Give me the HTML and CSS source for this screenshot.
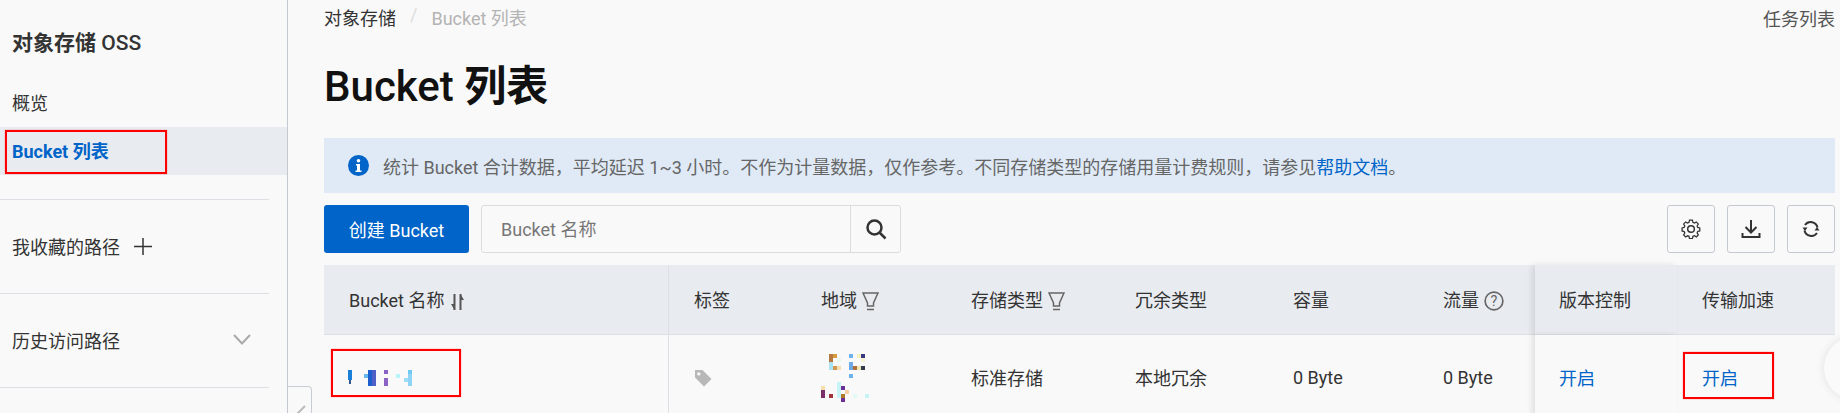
FILE: index.html
```html
<!DOCTYPE html>
<html lang="zh-CN">
<head>
  <meta charset="UTF-8" />
  <title>Bucket 列表 - 对象存储 OSS</title>
  <link rel="stylesheet" href="styles.css">
</head>
<body>

  <aside class="sidebar">
    <div class="side-title"><span class="cjk-bold">对象存储</span> OSS</div>
    <nav class="side-nav">
      <a class="side-item">概览</a>
      <a class="side-item active">Bucket 列表<span class="mark mark-nav"></span></a>
    </nav>
    <div class="side-section">
      <span>我收藏的路径</span>
      <svg class="side-plus" width="18" height="18" viewBox="0 0 18 18"><path d="M0 9.5h18M9 1v17" /></svg>
    </div>
    <div class="side-section">
      <span>历史访问路径</span>
      <svg class="side-chevron" width="18" height="11" viewBox="0 0 18 11"><path d="M1 1l8 8.500 8-8.500" /></svg>
    </div>
    <div class="side-section"></div>
  </aside>
  <div class="collapse-handle">
    <svg width="12" height="12" viewBox="0 0 12 12"><path d="M1 11L10 2" /></svg>
  </div>

  <main class="content">
    <div class="topbar">
      <div class="crumbs">
        <span>对象存储</span>
        <span class="crumb-sep">/</span>
        <span class="crumb-current">Bucket 列表</span>
      </div>
      <a class="task-link">任务列表</a>
    </div>

    <h1>Bucket <span class="cjk-bold">列表</span></h1>

    <div class="notice">
      <svg class="notice-icon" width="21" height="21" viewBox="0 0 21 21">
        <circle cx="10.500" cy="10.500" r="10.500" fill="#0064c8" />
        <circle cx="10.500" cy="5.800" r="1.800" fill="#fff" />
        <path d="M8 9h4v6.500h1.500V17h-6v-1.500H9v-5H8z" fill="#fff" />
      </svg>
      <span>统计 Bucket 合计数据，平均延迟 1~3 小时。不作为计量数据，仅作参考。不同存储类型的存储用量计费规则，请参见<a class="link">帮助文档</a>。</span>
    </div>

    <div class="toolbar">
      <button class="btn-primary">创建 Bucket</button>
      <div class="search">
        <input type="text" placeholder="Bucket 名称" />
        <button class="search-btn">
          <svg width="22" height="22" viewBox="0 0 22 22"><circle cx="9.500" cy="9.500" r="7" /><path d="M14.500 14.500L20.500 20.500" /></svg>
        </button>
      </div>
      <div class="tool-group">
        <button class="tool-btn">
          <svg width="20" height="20" viewBox="0 0 18 18"><path d="M7.500 1h3l.5 2.300 1.500.7 2-1.200 2 2.100-1.200 2 .6 1.500 2.100.6v3l-2.100.5-.6 1.500 1.200 2-2 2.100-2-1.200-1.500.6-.5 2.300h-3L7 17.500 5.500 17l-2 1.200-2-2.100 1.200-2L2 12.600-.1 12V9l2.100-.6.700-1.500-1.200-2 2-2.100 2 1.200L7 3.300z" transform="scale(.88) translate(1.200 .2)" /><circle cx="9" cy="9" r="3" /></svg>
        </button>
        <button class="tool-btn">
          <svg width="20" height="20" viewBox="0 0 20 20"><path class="thick" d="M10 1v12M4.500 8l5.500 5.500L15.500 8M1.500 14v4h17v-4" /></svg>
        </button>
        <button class="tool-btn">
          <svg width="18" height="18" viewBox="0 0 18 18"><path class="thick" d="M15.500 7.500A7 7 0 0 0 3 5M2.500 10.500A7 7 0 0 0 15 13" /><path class="solid" d="M.5 7.500h5L3 11zM12.500 10.500h5L15 7z" /></svg>
        </button>
      </div>
    </div>

    <table class="bucket-table">
      <colgroup>
        <col class="col-name"><col class="col-tag"><col class="col-region"><col class="col-type"><col class="col-redundancy"><col class="col-size"><col class="col-flow"><col class="col-version"><col class="col-accel">
      </colgroup>
      <thead>
        <tr>
          <th class="split">Bucket 名称
            <svg class="th-icon" width="15" height="18" viewBox="0 0 15 18"><path class="sort" d="M4.500 1v16M10.500 1v16" /><path class="solid" d="M4.500 17L1 11h3.500zM10.500 1L14 7h-3.500z" /></svg>
          </th>
          <th>标签</th>
          <th>地域
            <svg class="th-icon" width="17" height="19" viewBox="0 0 17 19"><path d="M1 1h15l-4.500 10v3h-6v-3zM5 17.500h7" /></svg>
          </th>
          <th>存储类型
            <svg class="th-icon" width="17" height="19" viewBox="0 0 17 19"><path d="M1 1h15l-4.500 10v3h-6v-3zM5 17.500h7" /></svg>
          </th>
          <th>冗余类型</th>
          <th>容量</th>
          <th>流量
            <svg class="th-icon" width="20" height="20" viewBox="0 0 18 18"><circle cx="9" cy="9" r="8" /><text x="9" y="13.500" text-anchor="middle" class="help-mark">?</text></svg>
          </th>
          <th class="pinned">版本控制</th>
          <th>传输加速</th>
        </tr>
      </thead>
      <tbody>
        <tr>
          <td class="split media">
            <div class="cell-mark">
              <svg class="mosaic mosaic-name" width="70" height="28" viewBox="0 0 70 28">
                <rect x="0" y="6" width="4" height="10" fill="#1a7fd8" /><rect x="1" y="16" width="2" height="4" fill="#35558f" />
                <rect x="16" y="10" width="4" height="4" fill="#6ab8f0" /><rect x="20" y="6" width="4" height="16" fill="#1e5fd0" /><rect x="24" y="6" width="4" height="16" fill="#4f5fc8" />
                <rect x="36" y="6" width="4" height="4" fill="#8a63c4" /><rect x="36" y="14" width="4" height="8" fill="#8a63c4" />
                <rect x="48" y="10" width="4" height="4" fill="#b8f3f8" /><rect x="60" y="6" width="4" height="4" fill="#6fc8f5" /><rect x="56" y="14" width="4" height="4" fill="#9fdcf5" /><rect x="60" y="10" width="4" height="12" fill="#8fd3f5" />
              </svg>
              <span class="mark mark-name"></span>
            </div>
          </td>
          <td class="media">
            <svg class="tag-icon" width="18" height="18" viewBox="0 0 18 18"><path fill-rule="evenodd" d="M1 1h7.500L17.500 10 10 17.500 1 8.500zM4.800 3.200a1.700 1.700 0 1 0 0 3.400 1.700 1.700 0 0 0 0-3.400z" /></svg>
          </td>
          <td class="media">
            <svg class="mosaic" width="50" height="56" viewBox="0 0 50 56">
              <rect x="8" y="4" width="4" height="8" fill="#b5793f" /><rect x="12" y="4" width="4" height="4" fill="#d69a3f" /><rect x="8" y="12" width="4" height="8" fill="#a9e3f5" /><rect x="12" y="16" width="4" height="4" fill="#cf9a50" /><rect x="16" y="16" width="4" height="4" fill="#f3dfb0" /><rect x="16" y="8" width="4" height="4" fill="#e9f8ec" />
              <rect x="28" y="4" width="4" height="4" fill="#6fb3ee" /><rect x="28" y="12" width="4" height="8" fill="#6fa9e4" /><rect x="32" y="16" width="4" height="4" fill="#b06f3a" /><rect x="28" y="24" width="4" height="4" fill="#6fb3ee" /><rect x="36" y="4" width="4" height="4" fill="#f7f0c0" /><rect x="40" y="4" width="4" height="4" fill="#3a3a80" /><rect x="40" y="8" width="4" height="4" fill="#f6f3d0" /><rect x="36" y="16" width="4" height="4" fill="#efe6b5" /><rect x="40" y="16" width="4" height="4" fill="#333a4a" />
              <rect x="0" y="36" width="4" height="4" fill="#f4deaa" /><rect x="0" y="40" width="4" height="8" fill="#7a2f6b" /><rect x="8" y="44" width="4" height="4" fill="#a3333f" /><rect x="16" y="32" width="4" height="16" fill="#c9f4f7" /><rect x="20" y="36" width="4" height="4" fill="#6a3094" /><rect x="24" y="40" width="4" height="4" fill="#f7cfa0" /><rect x="20" y="44" width="4" height="4" fill="#b07a2a" /><rect x="20" y="48" width="4" height="4" fill="#6a3094" /><rect x="32" y="44" width="4" height="4" fill="#e5f8f8" /><rect x="44" y="44" width="4" height="4" fill="#c5f5f5" />
            </svg>
          </td>
          <td>标准存储</td>
          <td>本地冗余</td>
          <td>0 Byte</td>
          <td>0 Byte</td>
          <td class="pinned"><a class="link">开启</a></td>
          <td><div class="cell-mark"><a class="link">开启</a><span class="mark mark-accel"></span></div></td>
        </tr>
      </tbody>
    </table>
  </main>

  <div class="float-ball"></div>

</body>
</html>
```

FILE: styles.css
```css
* {
  box-sizing: border-box;
}

body {
  margin: 0;
  height: 413px;
  overflow: hidden;
  display: flex;
  position: relative;
  background: #f9f9f9;
  color: #333;
  font-family: Roboto, 'Noto Sans CJK SC', sans-serif;
  font-size: 18px;
}

a {
  cursor: pointer;
}

.link {
  color: #0064c8;
}

.cjk-bold {
  font-weight: 700;
}

/* Red annotation boxes drawn over the screenshot */
.mark {
  position: absolute;
  border: 2px solid #f00;
  box-shadow: 0 0 1px rgba(255, 0, 0, 0.6);
  pointer-events: none;
}

.mark-nav {
  left: 5px;
  top: 3px;
  width: 162px;
  height: 44px;
}

.mark-name {
  left: -18px;
  top: -15px;
  width: 130px;
  height: 48px;
}

.mark-accel {
  left: -19px;
  top: -12px;
  width: 91px;
  height: 47px;
}

.cell-mark {
  position: relative;
}

/* Sidebar */
.sidebar {
  flex: 0 0 288px;
  border-right: 1px solid #c4c8d0;
}

.side-title {
  padding: 28px 0 0 12px;
  line-height: 30px;
  font-size: 21px;
  font-weight: 500;
}

.side-nav {
  margin: 21px 0 24px;
}

.side-item {
  display: block;
  position: relative;
  height: 48px;
  line-height: 49px;
  padding-left: 12px;
}

.side-item.active {
  background: #e8ebf0;
  color: #0064c8;
  font-weight: 700;
}

.side-section {
  height: 94px;
  margin-right: 18px;
  padding: 0 18px 2px 12px;
  border-top: 1px solid #dcdfe4;
  display: flex;
  align-items: center;
}

.side-plus {
  margin-left: 14px;
}

.side-plus path {
  fill: none;
  stroke: #333;
  stroke-width: 1.500;
}

.side-chevron {
  margin-left: auto;
}

.side-chevron path {
  fill: none;
  stroke: #aaa;
  stroke-width: 2;
}

.collapse-handle {
  position: absolute;
  left: 288px;
  top: 386px;
  width: 24px;
  height: 40px;
  border: 1px solid #c8ccd4;
  border-left: none;
  border-radius: 0 4px 4px 0;
  padding: 17px 0 0 7px;
}

.collapse-handle svg {
  display: block;
}

.collapse-handle path {
  stroke: #bbb;
  stroke-width: 2;
}

/* Main area */
.content {
  flex: 1;
  min-width: 0;
  padding: 0 5px 0 36px;
}

.topbar {
  height: 36px;
  display: flex;
  justify-content: space-between;
  align-items: center;
}

.crumbs {
  display: flex;
  gap: 14px;
  padding-bottom: 2px;
}

.crumb-sep {
  color: #ddd;
}

.crumb-current {
  color: #b3b3b3;
}

.task-link {
  color: #555;
}

h1 {
  margin: 0;
  height: 102px;
  line-height: 102px;
  font-size: 42px;
  font-weight: 500;
  color: #111;
}

.notice {
  height: 55px;
  padding-left: 24px;
  display: flex;
  align-items: center;
  gap: 14px;
  background: #dfeaf6;
  color: #666;
}

.notice-icon {
  flex: none;
}

.toolbar {
  margin-top: 12px;
  height: 48px;
  display: flex;
  gap: 12px;
}

button {
  font: inherit;
  cursor: pointer;
  padding: 0;
}

.btn-primary {
  width: 145px;
  border: none;
  border-radius: 3px;
  background: #0064c8;
  color: #fff;
}

.search {
  width: 420px;
  display: flex;
  border: 1px solid #dcdcdc;
  border-radius: 3px;
}

.search input {
  flex: 1;
  min-width: 0;
  padding: 0 0 0 19px;
  border: none;
  background: transparent;
  font: inherit;
  outline: none;
}

.search input::placeholder {
  color: #777;
  opacity: 1;
}

.search-btn {
  width: 50px;
  border: none;
  border-left: 1px solid #dcdcdc;
  background: transparent;
  display: flex;
  align-items: center;
  justify-content: center;
}

.search-btn svg {
  fill: none;
  stroke: #333;
  stroke-width: 2.500;
}

.tool-group {
  margin-left: auto;
  display: flex;
  gap: 12px;
}

.tool-btn {
  width: 48px;
  border: 1px solid #c4c8d0;
  border-radius: 3px;
  background: transparent;
  display: flex;
  align-items: center;
  justify-content: center;
}

.tool-btn svg {
  fill: none;
  stroke: #333;
  stroke-width: 1.300;
}

.tool-btn .thick {
  stroke-width: 2;
}

.tool-btn .solid {
  fill: #333;
  stroke: none;
}

/* Table */
.bucket-table {
  margin-top: 12px;
  width: 1511px;
  table-layout: fixed;
  border-collapse: separate;
  border-spacing: 0;
}

.col-name { width: 345px; }
.col-tag { width: 127px; }
.col-region { width: 150px; }
.col-type { width: 164px; }
.col-redundancy { width: 158px; }
.col-size { width: 150px; }
.col-flow { width: 117px; }
.col-version { width: 142px; }
.col-accel { width: 158px; }

th, td {
  padding: 0 0 2px 25px;
  text-align: left;
  font-weight: 400;
  white-space: nowrap;
}

th {
  height: 70px;
  background: #e8ebf0;
  border-bottom: 1px solid #dcdfe4;
}

td {
  height: 86px;
}

td.media {
  padding-bottom: 0;
}

.split {
  border-right: 1px solid #dcdfe4;
}

.pinned {
  position: relative;
  padding-left: 24px;
  background: #f9f9f9;
  box-shadow: -3px 0 6px rgba(0, 0, 0, 0.1);
}

th.pinned {
  background: #e8ebf0;
}

.th-icon {
  vertical-align: -4px;
  margin-left: 1px;
  fill: none;
  stroke: #666;
  stroke-width: 1.500;
}

.th-icon .sort {
  stroke: #555;
  stroke-width: 2;
}

.th-icon .solid {
  fill: #555;
  stroke: none;
}

.help-mark {
  fill: #666;
  stroke: none;
  font-size: 13px;
}

.tag-icon {
  display: block;
  fill: #b8b8b8;
}

.mosaic {
  display: block;
}

.mosaic-name {
  margin-left: -1px;
}

/* Round floating helper cut off by the window edge */
.float-ball {
  position: absolute;
  left: 1824px;
  top: 336px;
  width: 64px;
  height: 64px;
  border-radius: 50%;
  background: #fafafa;
  box-shadow: 0 0 10px rgba(0, 0, 0, 0.1);
}
```
